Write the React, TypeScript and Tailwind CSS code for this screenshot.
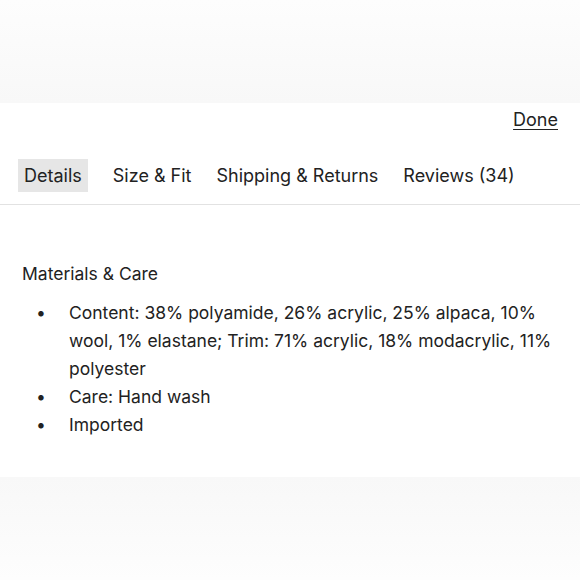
export default function App() {
  const tabs = ["Details", "Size & Fit", "Shipping & Returns", "Reviews (34)"];
  const items = [
    "Content: 38% polyamide, 26% acrylic, 25% alpaca, 10% wool, 1% elastane; Trim: 71% acrylic, 18% modacrylic, 11% polyester",
    "Care: Hand wash",
    "Imported",
  ];

  return (
    <div
      className="w-[580px] h-[580px] flex flex-col bg-white text-[#222] overflow-hidden"
      style={{ fontFamily: "Inter, 'Noto Sans', sans-serif" }}
    >
      <div className="h-[103px] shrink-0 bg-gradient-to-b from-[#fdfdfd] to-[#f8f8f8]" />

      <div className="h-[374px] shrink-0 bg-white flex flex-col">
        <div className="flex justify-end px-[22px] pt-[5px] h-[44px]">
          <span className="text-[18px] underline underline-offset-[3px] leading-[24px]">Done</span>
        </div>

        <div className="flex items-center gap-[25px] px-[18px] h-[57px]">
          {tabs.map((t, i) => (
            <div
              key={t}
              className={
                i === 0
                  ? "h-[33px] px-[6px] flex items-center bg-[#e6e6e6] text-[18px]"
                  : "h-[33px] flex items-center text-[18px]"
              }
            >
              {t}
            </div>
          ))}
        </div>

        <div className="border-b border-[#e2e2e2]" />

        <div className="px-[22px] pt-[55px]">
          <div className="text-[17.5px] leading-[28px]">Materials &amp; Care</div>
          <ul className="mt-[11px]">
            {items.map((it) => (
              <li key={it} className="flex text-[17.5px] leading-[28px]">
                <span className="w-[47px] shrink-0 pl-[14px]">•</span>
                <span>{it}</span>
              </li>
            ))}
          </ul>
        </div>
      </div>

      <div className="flex-1 bg-gradient-to-b from-[#f8f8f8] to-[#fdfdfd]" />
    </div>
  );
}
